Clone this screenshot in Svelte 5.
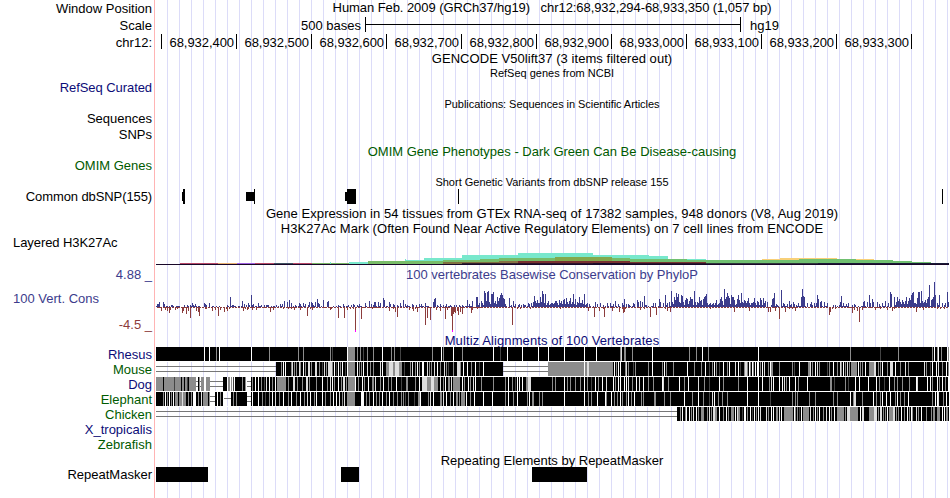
<script lang="ts">
    type Bar = { x: number; y: number; w: number; h: number; fill: string };

    const LEFT = 156;
    const WIDTH = 793;

    const shades: Record<string, string> = {
        k: "#000",
        d: "#444",
        g: "#8c8c8c",
        l: "#dedede",
        w: "#fff",
    };

    const positions = [
        "68,932,400", "68,932,500", "68,932,600", "68,932,700", "68,932,800",
        "68,932,900", "68,933,000", "68,933,100", "68,933,200", "68,933,300",
    ];

    const snps: number[][] = [
        [182, 3, 1, 9], [183, 0, 2, 15], [246, 3, 8, 9], [254, 0, 1, 15],
        [345, 3, 2, 9], [347, 0, 9, 15], [458, 0, 1, 15], [942, 0, 1, 15],
    ];

    const repeats = [[156, 52], [341, 18], [532, 55]];

    // x, top, width, colour; every step reaches down to the baseline
    const acetylation: [number, number, number, string][] = [
        [180, 28, 38, "#b84868"], [218, 28, 19, "#e8b070"], [237, 28, 18, "#a060e0"],
        [255, 28, 19, "#b84868"], [274, 28, 19, "#405060"], [293, 28, 19, "#b84868"],
        [312, 28, 56, "#78b464"], [330, 27, 1, "#78e8cc"],
        [349, 27, 56, "#78e8cc"], [405, 24, 1, "#78e8cc"], [405, 25, 19, "#78e8cc"],
        [424, 23, 38, "#78e8cc"], [462, 20, 56, "#78e8cc"], [518, 18, 75, "#78e8cc"],
        [593, 20, 56, "#78e8cc"], [649, 21, 19, "#78e8cc"], [668, 24, 38, "#78e8cc"],
        [706, 25, 37, "#78e8cc"], [762, 24, 18, "#f8d078"], [780, 23, 57, "#f8d078"],
        [837, 24, 37, "#f8d078"], [368, 26, 75, "#78bc68"], [443, 25, 37, "#78bc68"],
        [480, 24, 19, "#78bc68"], [499, 23, 56, "#78bc68"], [555, 22, 57, "#84a84c"],
        [612, 23, 18, "#78bc68"], [630, 24, 57, "#70c070"], [687, 25, 75, "#70c070"],
        [743, 25, 56, "#70c070"], [799, 24, 57, "#70c070"], [856, 25, 37, "#70c070"],
        [893, 26, 19, "#70c070"], [912, 27, 19, "#70c070"],
        [443, 27, 56, "#807040"], [499, 26, 19, "#887044"], [518, 26, 112, "#783030"],
        [630, 27, 76, "#783830"], [593, 28, 37, "#201830"], [818, 28, 132, "#205060"],
    ];

    // conservation scores as x:height pairs, in pixels from the zero line
    const conservation = `157:3 158:3 159:5 163:5 164:3 167:1 172:2 178:1 192:4 193:2 195:3 204:4 205:3 209:4
        230:10 232:2 233:2 235:1 242:6 244:3 248:4 251:12 253:3 258:4 261:2 264:2 266:2 267:2 268:2 273:1 276:2
        280:3 282:3 284:6 287:5 289:7 291:4 295:2 299:4 300:3 303:4 305:3 309:5 312:4 315:4 317:8 318:4
        311:5 313:2 315:5 317:3 319:3 323:7 327:5 328:6 333:1 343:3 348:2 353:3 354:2 359:3 365:4 369:6
        371:3 374:5 375:5 378:5 380:4 383:9 384:7 389:5 390:3 393:3 397:2 400:4 403:7 405:3 407:2 412:3 416:2
        419:3 421:3 425:4 427:1 433:5 434:8 435:9 437:2 440:3 446:3 450:2 454:2 467:7 469:3 472:6 476:10 477:10
        479:4 481:6 482:4 484:16 485:14 486:6 487:15 488:16 489:5 491:13 492:13 493:15 495:6 497:10 498:6
        499:9 500:12 501:14 502:12 503:9 504:8 509:9 511:2 513:6 515:3 519:3 523:3 525:2 528:4 529:3 531:4
        533:5 534:11 535:6 537:7 538:4 540:10 541:5 542:16 543:13 544:4 545:13 547:4 548:6 550:2 552:4 553:3
        555:6 556:6 559:7 561:6 563:7 564:8 566:9 567:5 569:6 570:9 572:5 573:13 575:8 577:5 579:10 580:4 582:7
        584:13 586:3 589:3 595:5 597:3 600:4 603:2 607:4 610:4 613:3 615:6 618:3 622:4 624:8 626:3 628:3
        633:4 634:3 637:7 638:5 640:6 642:5 644:11 646:2 653:4 655:4 659:8 660:5 663:4 665:12 667:4 669:5
        671:16 672:5 674:10 675:7 676:14 677:10 678:13 679:5 681:12 682:11 683:5 685:7 686:9 687:8 689:6 690:10
        691:8 692:8 694:16 695:5 697:5 699:10 700:6 701:7 703:8 704:10 705:11 706:13 711:2 713:3 715:4 716:7 718:3
        720:8 721:10 722:6 724:18 725:8 726:10 727:14 728:11 729:9 731:12 732:10 733:10 734:7 737:8 738:12
        739:7 741:14 742:5 744:7 745:6 747:6 748:9 751:4 753:5 754:9 755:4 757:6 758:5 760:9 761:7 763:9 765:6 767:5
        772:8 773:9 774:14 776:3 781:17 783:4 784:3 787:3 789:6 791:3 793:5 794:3 798:4 801:10 802:18 803:11
        804:10 807:4 810:3 811:5 814:4 816:4 817:12 818:8 820:5 821:6 824:5 827:4 835:2 840:5 841:11 843:4 846:3
        848:4 854:3 863:5 864:6 867:5 869:12 870:4 872:8 873:5 877:5 879:3 882:4 885:6 888:4 890:15 891:13 894:10
        896:5 897:10 898:6 899:8 900:5 902:7 903:5 905:6 906:10 908:6 909:9 910:7 911:12 912:14 913:15 915:4 917:9
        918:15 919:15 921:16 922:6 924:5 925:7 927:8 928:10 929:22 931:7 932:8 933:10 934:26 935:12 937:4 939:12
        942:4 945:4 947:15 948:5
        161:-4 165:-3 167:-4 169:-6 170:-3 175:-3 177:-2 182:-6 183:-4 186:-7 188:-4 190:-11 196:-4 198:-5 199:-9
        206:-2 212:-4 215:-3 218:-9 220:-3 224:-5 227:-4 229:-2 243:-4 247:-3 252:-3 256:-3 270:-5 273:-3
        283:-2 294:-3 300:-3 307:-9 312:-3 330:-3 338:-11 344:-11 347:-3 355:-25 361:-12 389:-4 395:-5 397:-10
        409:-3 413:-4 417:-5 425:-18 427:-11 430:-13 436:-3 440:-4 445:-12 447:-3 451:-9 452:-25 453:-7 454:-5
        455:-6 457:-4 458:-8 460:-5 462:-7 471:-6 472:-3 512:-18 530:-2 560:-2 588:-4 594:-10 599:-4 604:-10
        612:-4 619:-5 623:-6 624:-5 640:-3 650:-10 656:-8 667:-4 670:-5 710:-2 734:-5 749:-4 768:-5 770:-5
        775:-4 779:-12 785:-5 795:-4 829:-8 830:-5 852:-6 854:-3 857:-4 859:-15 862:-3 875:-3 880:-2 887:-3
        892:-4 916:-5 923:-3 940:-2 944:-2`
        .split(/\s+/)
        .map((p) => p.split(":").map(Number));

    // faint scores between the peaks
    const ripple = "1001201-10-201-11002-1010-1-20110102-1010";
    const background = ripple.match(/-?\d/g)!.map(Number);

    function scoreBars(): Bar[] {
        const bars: Bar[] = [];
        for (let i = 0; i < WIDTH; i++) {
            const x = LEFT + i;
            const dense = (x > 480 && x < 506) || (x > 532 && x < 588) || (x > 670 && x < 766) || (x > 895 && x < 930);
            const h = dense ? 2 + (i % 3) : background[(i * 7 + (i >> 3)) % background.length];
            if (h >= 0) bars.push({ x, y: 25 - h, w: 1, h, fill: "#3c3c8c" });
            bars.push({ x, y: 25, w: 1, h: h < 0 ? -h : i % 3 ? 1 : 0, fill: "#8c3c3c" });
        }
        for (const [x, h] of conservation) {
            if (h > 0) bars.push({ x, y: 25 - h, w: 1, h, fill: "#3c3c8c" });
            else bars.push({ x, y: 25, w: 1, h: -h, fill: "#8c3c3c" });
            if (h <= -25) bars.push({ x, y: 48, w: 1, h: 2, fill: "#f0f" });
        }
        return bars;
    }

    // each stripe is start, shade and an optional width
    function parse(stripes: string): Bar[] {
        return stripes
            .trim()
            .split(/\s+/)
            .map((s) => {
                const [, x, shade, w] = s.match(/^(\d+)([a-z])(\d*)$/)!;
                return { x: +x, y: 0, w: +(w || 1), h: 14, fill: shades[shade] };
            });
    }

    const species = [
        {
            name: "Rhesus", color: "navy", double: [], single: [],
            bars: parse(`156k794 204w 209w 216g 219w 251w 269g 298g 303g 330g 332d 347w 348g7 357g 360g 363d 367g 373g
                382w 391g 394g 400d 432g 441w 443g 453w 462g 493w 500d 507w 522w 538w 548w 564w 584w 596w 620g 621l
                624g2 632g 652w 689g 696g 702w 708g 758w 850g 880d 898g 932g 934w 937g 938w 941g 947w 948g2`),
        },
        {
            name: "Mouse", color: "green", double: [[156, 120], [503, 45]], single: [],
            bars: parse(`276k227 281g 283w 285w 291g 292l 294g 296g 299l 300g 303w 305g 308l2 311g 315l2 319g 322d 324l
                326g 328l4 332g 334w 336d 338w 340g 342w 345d 347w 348g7 357w 359g 361g 363w 367l 370g 373g 380l 382w
                386g3 389l4 393g2 395l4 399g3 404d 410g 412l 415g 417w 419g 422w2 427l 429g 431g 434l 437w 440g 444l
                446g 448d 453g 457l3 460g 463w 467w 471g 475w 479d 483w 548g66 584w 587l2 613k337 614w 616g 618w
                620w 625g 626l 628g 633d 635g 648g 652w 662g 664w 666g 673g 687w 694g 701g 705w 709d 712g 714w 716g
                719d 723w 727g 729w 735l 738w 740d 744g 745l2 747g 749w 750g 752w 753g 755w 757w2 760g 762w 764l 768g
                770w 771g2 779g 792g 794d 799w 808g2 810l 812g 815w 817l 819g 827d 829g 833w 837g 840l 841g 843w 845g
                847l 849g 851g6 858w 860g 862g 865w 869g5 874l2 878g 880g 882w 887g 890l3 895w 900g 905l 908g 924l
                926g 930d 932w 936w 938l 942g 946w 948g`),
        },
        {
            name: "Dog", color: "navy", double: [[196, 5], [210, 13], [247, 4]], single: [],
            bars: parse(`156g40 163k 174d 181k 184k 187d 188k 198k 199g 201g3 204w 206g4 223k4 227w 228g2 231g 233d
                235k9 242g 244k2 245g 251k699 252g 255w 258w 261g 264d 266l 269w 272g 275w 277g9 288g 293l2 297g 302g
                306l2 309g 316g 322w 327g 330l 332w 334g 338w 341g 343l2 346g 348g7 355w 358g 362w 364g 368w 372g2
                375l 380g 383w 388g 391g 396w 401d 406g2 415g 419w 422l5 427g4 431l3 434g4 440l 443g 445w 448g2 451l
                453g7 462w 464g 468w 470g 473l 475w 481g 493g 505g 508w 512g 515d 517w 519w 522w 526g2 528l3 552g
                555g 564w 567g 570g 575g 580g 584w 587g 591d 595w 598g 602w 606l 613w 615g 618w 620w 624w 626w 628l
                632g 636w 639l 643w 648g 653g 662w 663l 668g 679w 684g 688w 698l 704g 709d 719w 723g 738g 747w 758w
                762w 769g 771l 773w 779w 782w 784l 786g 789w 795w 798g 807w 830g2 834d 845g 848d 855w 859w 868w 876w
                879g 884d 889w 894g 897g 902g 909g 916w 917l 927w 930w 932g 937w 939g 942w 945g 948w`),
        },
        {
            name: "Elephant", color: "green", double: [[210, 5], [247, 4]], single: [[224, 7]],
            bars: parse(`156k54 163g 165w 167g 169w 171g 173w 175g3 179g3 182l 183g3 188g 191g 193w3 198g 201l 203g5
                209g 215k8 217w 220g 231k16 233g 236g 251k699 252w 258w 262g 265d 269g 272w 275l 279g 283w 288g 291w
                296g 300w 304g 307l 310w 314g 316w 322w 325g 330g 333w 336w 339l 342g 344l 347g 348g7 361w3 366g
                369g 373w 376g 379g 382w 386g 389w 393g 397g 401g 403g 405d 408g 414d 418g2 420w 428g 430l 433w 440g2
                443l 446w 450g 453w 456g2 459g 461g4 466w 470g 474w 483w 492w 505g 508w 513g 517w 527g 529w 532g2
                539g 542g 564w 584w 588g 591g 597w 605w 606g 611w 614g 617g 620w 622g 626g 628w 631g 634w 641g
                643g 654g2 664g 670g 684w 692g 698w 703g 709d 712l 714w 718g 722g 727g 747w 758w 770d 792g 795g 797g
                809g 815g 833g 837g 850w 853g 854l2 862g 873w 876g 880g 882w 886w 890w 895g 897w 900g 904g 908w
                932g 935w 937w 938l 943g 946w`),
        },
        {
            name: "Chicken", color: "green", double: [[156, 521]], single: [],
            bars: parse(`677k273 680g 682w 685g 686w 689w 691g 693l 696w 698g 701g3 707g 709l 711g 713l2 715g2 719w
                723g 726w 728g 731g3 735w 737l 738g2 742d 744w2 747g 750w 752d 754w 756g 758w 760l 762k 766l 768g 771w
                773w 776g2 779l 781w 784g9 794w 795g 797g 799d 801w 803g6 810l 813g 815w 817g 819w 823g 826l 829w
                831g 834w 837g7 845g 847l3 850g8 860w 862l2 869g6 874l3 878g 880l2 883g 885g 887w 889g4 893l2 896g
                898g 901w 904g 907w 909g 911w 912g 916l 918g 921w 926g 931g 933g2 937g3 942w 944w 946g2`),
        },
    ];

    const scores = scoreBars();
</script>

{#snippet bars(items: Bar[], height: number)}
    <svg width={WIDTH} {height} viewBox="{LEFT} 0 {WIDTH} {height}">
        {#each items as b}
            <rect x={b.x} y={b.y} width={b.w} height={b.h} fill={b.fill} />
        {/each}
    </svg>
{/snippet}

<main class="browser">
    <section class="row head">
        <span class="label">Window Position</span>
        <span class="title position">Human Feb. 2009 (GRCh37/hg19) &nbsp; chr12:68,932,294-68,933,350 (1,057 bp)</span>
    </section>
    <section class="row scale-row">
        <span class="label">Scale</span>
        <div class="scale">
            <span class="bases">500 bases</span>
            <div class="scale-bar"></div>
            <span>hg19</span>
        </div>
    </section>
    <section class="row ruler-row">
        <span class="label">chr12:</span>
        <div class="ruler">
            {#each positions as position}
                <span>{position}</span>
            {/each}
        </div>
    </section>
    <section class="row gencode"><i></i><span class="title">GENCODE V50lift37 (3 items filtered out)</span></section>
    <section class="row refseq-title"><i></i><span class="title small">RefSeq genes from NCBI</span></section>
    <section class="row refseq"><span class="label navy">RefSeq Curated</span></section>
    <section class="row pubs"><i></i><span class="title small">Publications: Sequences in Scientific Articles</span></section>
    <section class="row sequences"><span class="label">Sequences</span></section>
    <section class="row snps"><span class="label">SNPs</span></section>
    <section class="row omim-title"><i></i><span class="title green">OMIM Gene Phenotypes - Dark Green Can Be Disease-causing</span></section>
    <section class="row omim"><span class="label green">OMIM Genes</span></section>
    <section class="row dbsnp-title"><i></i><span class="title small">Short Genetic Variants from dbSNP release 155</span></section>
    <section class="row dbsnp">
        <span class="label">Common dbSNP(155)</span>
        {@render bars(snps.map(([x, y, w, h]) => ({ x, y, w, h, fill: "#000" })), 15)}
    </section>
    <section class="row gtex"><i></i><span class="title">Gene Expression in 54 tissues from GTEx RNA-seq of 17382 samples, 948 donors (V8, Aug 2019)</span></section>
    <section class="row h3k-title"><i></i><span class="title">H3K27Ac Mark (Often Found Near Active Regulatory Elements) on 7 cell lines from ENCODE</span></section>
    <section class="row h3k">
        <span class="label wide">Layered H3K27Ac</span>
        <svg width={WIDTH} height="30" viewBox="{LEFT} 0 {WIDTH} 30">
            {#each acetylation as [x, top, w, fill]}
                <rect {x} y={top} width={w} height={29 - top} {fill} />
            {/each}
            <rect x={LEFT} y="29" width={WIDTH} height="1" fill="#180828" />
            <rect x="462" y="28" width="488" height="1" fill="#180828" opacity="0.75" />
        </svg>
    </section>
    <section class="row phylop-title">
        <span class="label limit blue">4.88 _</span>
        <span class="title blue">100 vertebrates Basewise Conservation by PhyloP</span>
    </section>
    <section class="row phylop">
        <div class="limits">
            <span class="blue">100 Vert. Cons</span>
            <span class="minimum">-4.5 _</span>
        </div>
        {@render bars(scores, 50)}
    </section>
    <section class="row multiz"><i></i><span class="title navy">Multiz Alignments of 100 Vertebrates</span></section>
    {#each species as s}
        <section class="row species">
            <span class="label {s.color}">{s.name}</span>
            <svg width={WIDTH} height="15" viewBox="{LEFT} 0 {WIDTH} 15">
                <rect x={s.bars[0].x} y="14" width={950 - s.bars[0].x} height="1" fill="#fff" />
                {#each s.double as [x, w]}
                    <rect {x} y="4" width={w} height="1" fill="#777" />
                    <rect {x} y="9" width={w} height="1" fill="#777" />
                {/each}
                {#each s.single as [x, w]}
                    <rect {x} y="6" width={w} height="1" fill="#777" />
                {/each}
                {#each s.bars as b}
                    <rect x={b.x} y="0" width={b.w} height="14" fill={b.fill} />
                {/each}
            </svg>
        </section>
    {/each}
    <section class="row species"><span class="label navy">X_tropicalis</span></section>
    <section class="row species"><span class="label green">Zebrafish</span></section>
    <section class="row repeat-title"><i></i><span class="title">Repeating Elements by RepeatMasker</span></section>
    <section class="row repeat">
        <span class="label">RepeatMasker</span>
        {@render bars(repeats.map(([x, w]) => ({ x, y: 0, w, h: 15, fill: "#000" })), 15)}
    </section>
</main>

<style>
    .browser {
        box-sizing: border-box;
        width: 950px;
        height: 498px;
        overflow: hidden;
        background:
            linear-gradient(#ffb4b4, #ffb4b4) 154px 0 / 1px 100% no-repeat,
            repeating-linear-gradient(to right, transparent 0 11px, #dcdcf8 11px 12px) 156px 0 / 794px 100% no-repeat,
            #fff;
        color: #000;
        font-family: "Liberation Sans", Arial, sans-serif;
        font-size: 13px;
    }

    .row {
        display: grid;
        grid-template-columns: 156px 794px;
        height: 15px;
        line-height: 15px;
        white-space: nowrap;
    }

    .label {
        padding-right: 4px;
        text-align: right;
    }

    .label.wide {
        padding-left: 13px;
        text-align: left;
    }

    .title {
        padding-right: 2px;
        text-align: center;
    }

    .small {
        font-size: 11px;
    }

    svg {
        display: block;
        shape-rendering: crispEdges;
    }

    .head { height: 17px; line-height: 17px; }
    .head .title { line-height: 15px; letter-spacing: -0.07px; }
    .scale-row { height: 17px; line-height: 17px; }
    .ruler-row { height: 17px; line-height: 17px; }
    .gencode .title { letter-spacing: 0.05px; }
    .refseq-title { height: 14px; }
    .refseq { height: 16px; line-height: 16px; }
    .refseq .label { letter-spacing: -0.07px; }
    .pubs { height: 15px; line-height: 16px; }
    .pubs .title { letter-spacing: -0.06px; }
    .sequences { height: 16px; }
    .snps { height: 17px; }
    .omim-title { height: 14px; }
    .omim { height: 16px; line-height: 15px; }
    .dbsnp-title { height: 15px; line-height: 17px; }
    .dbsnp { height: 17px; }
    .dbsnp .label { letter-spacing: -0.1px; }
    .gtex .title,
    .h3k-title .title { letter-spacing: 0.055px; }
    .h3k-title { height: 14px; }
    .h3k { height: 30px; }
    .h3k .label { letter-spacing: -0.07px; }
    .phylop-title { height: 17px; line-height: 19px; }
    .phylop { height: 50px; }
    .multiz { height: 15px; line-height: 17px; }
    .multiz .title { letter-spacing: 0.1px; }
    .repeat-title { line-height: 17px; }

    .scale {
        display: grid;
        grid-template-columns: 205px 376px auto;
        column-gap: 4px;
    }

    .bases {
        text-align: right;
    }

    .scale span:last-child {
        padding-left: 5px;
    }

    .scale-bar {
        box-sizing: border-box;
        height: 15px;
        border: solid #000;
        border-width: 0 1px;
        background: linear-gradient(#000, #000) 0 7px / 100% 1px no-repeat;
    }

    .ruler {
        display: flex;
        height: 15px;
        margin-left: 5px;
        border-left: 1px solid #000;
    }

    .ruler span {
        box-sizing: border-box;
        width: 75px;
        padding-right: 2px;
        border-right: 1px solid #000;
        text-align: right;
        letter-spacing: -0.06px;
    }

    .limits {
        display: flex;
        flex-direction: column;
        justify-content: space-between;
        padding: 9px 4px 0 13px;
    }

    .minimum {
        color: #8c3c3c;
        text-align: right;
    }

    .navy { color: #0c0c78; }
    .green { color: #005a00; }
    .blue { color: #3c3c8c; }
</style>
